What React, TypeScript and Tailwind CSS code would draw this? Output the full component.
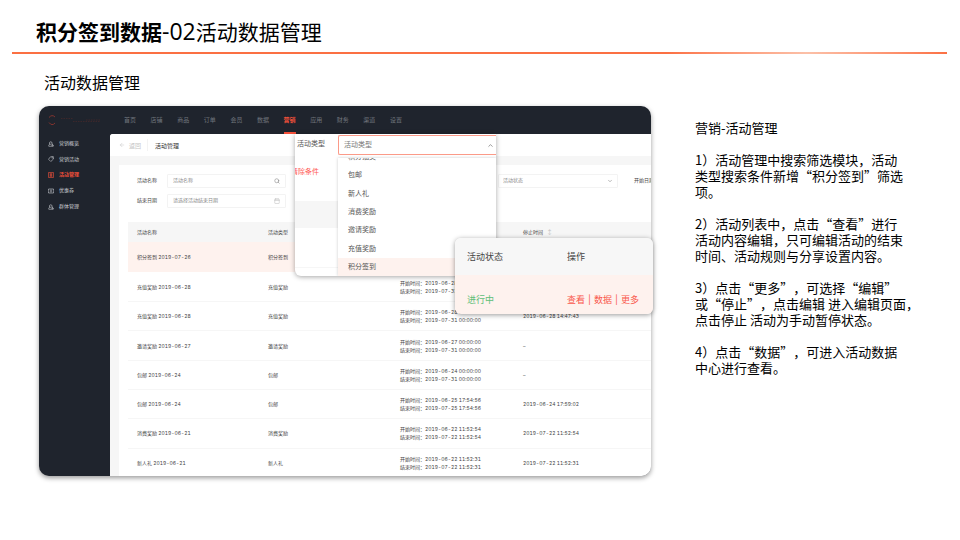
import React from "react";
import { ArrowLeft, Calendar, ChevronDown, ChevronUp, Search } from "lucide-react";

const navItems = ["首页", "店铺", "商品", "订单", "会员", "数据", "营销", "应用", "财务", "渠道", "设置"];

const sideItems = [
  { label: "营销概览", icon: "bell" },
  { label: "营销活动", icon: "tag" },
  { label: "活动管理", icon: "board" },
  { label: "优惠券", icon: "ticket" },
  { label: "群体管理", icon: "bell" },
];

const rows = [
  { name: "积分签到 2019-07-26", type: "积分签到", start: "2019-07-26 00:00:00", end: "2019-07-31 00:00:00", stop: "–" },
  { name: "充值奖励 2019-06-28", type: "充值奖励", start: "2019-06-28 00:00:00", end: "2019-07-31 00:00:00", stop: "–" },
  { name: "充值奖励 2019-06-28", type: "充值奖励", start: "2019-06-28 00:00:00", end: "2019-07-31 00:00:00", stop: "2019-06-28 14:47:43" },
  { name: "邀请奖励 2019-06-27", type: "邀请奖励", start: "2019-06-27 00:00:00", end: "2019-07-31 00:00:00", stop: "–" },
  { name: "包邮 2019-06-24", type: "包邮", start: "2019-06-24 00:00:00", end: "2019-07-31 00:00:00", stop: "–" },
  { name: "包邮 2019-06-24", type: "包邮", start: "2019-06-25 17:54:56", end: "2019-07-25 17:54:56", stop: "2019-06-24 17:59:02" },
  { name: "消费奖励 2019-06-21", type: "消费奖励", start: "2019-06-22 11:52:54", end: "2019-07-22 11:52:54", stop: "2019-07-22 11:52:54" },
  { name: "新人礼 2019-06-21", type: "新人礼", start: "2019-06-22 11:52:31", end: "2019-07-22 11:52:31", stop: "2019-07-22 11:52:31" },
];

const options = ["积分抽奖", "包邮", "新人礼", "消费奖励", "邀请奖励", "充值奖励", "积分签到"];

const notes = [
  ["营销-活动管理"],
  ["1）活动管理中搜索筛选模块，活动", "类型搜索条件新增“积分签到”筛选", "项。"],
  ["2）活动列表中，点击“查看”进行", "活动内容编辑，只可编辑活动的结束", "时间、活动规则与分享设置内容。"],
  ["3）点击“更多”，可选择“编辑”", "或“停止”，点击编辑 进入编辑页面，", "点击停止 活动为手动暂停状态。"],
  ["4）点击“数据”，可进入活动数据", "中心进行查看。"],
];

function SideIcon({ kind }: { kind: string }) {
  return (
    <svg viewBox="0 0 12 12" className="h-[6px] w-[6px] shrink-0" fill="none" stroke="currentColor" strokeWidth="1.2" aria-hidden="true">
      {kind === "bell" && (
        <>
          <path d="M3 6.5V4a2.5 2.5 0 0 1 5 0v2.500M1.500 10.500V8.500L3 6.500h4M1.500 10.500h9V8L8 6" />
          <circle cx="8.500" cy="8.500" r="1" />
        </>
      )}
      {kind === "tag" && (
        <>
          <path d="M5 1.500 10.500 1 11 6 5.500 11 1 6.500Z" />
          <circle cx="8.300" cy="3.700" r=".7" />
        </>
      )}
      {kind === "board" && <path d="M1 1h10v10H1zM3 4h6M3 8h6M6 2v8M4 6h4" />}
      {kind === "ticket" && <path d="M1 2h10v2.500L10 6l1 1.500V10H1V7.500L2 6 1 4.500zM4 4.500h4M4 7.500h4" />}
    </svg>
  );
}

function Header() {
  return (
    <header className="flex h-7 items-center text-[#70747c]">
      <div className="flex w-[71px] items-center gap-[5px] pl-[9px]">
        <svg viewBox="0 0 16 24" className="h-3 w-2" fill="none" stroke="#a33a30" strokeWidth="1.500" aria-hidden="true">
          <path d="M2 7Q8 0 14 6M2 17Q8 25 14 18" />
        </svg>
        <svg viewBox="0 0 80 12" className="h-[6px] w-10" fill="none" stroke="#5a2a2b" strokeWidth="1" strokeDasharray="3 2" aria-hidden="true">
          <path d="M0 3h24M24 9h54M50 6h28" />
        </svg>
      </div>
      <nav className="ml-[14px] flex h-full w-[278px] justify-between text-[6px]">
        {navItems.map((item) => (
          <a
            key={item}
            href="#"
            className={
              item === "营销"
                ? "flex items-center border-b-2 border-[#f4503a] font-bold text-[#f4503a]"
                : "flex items-center border-b-2 border-transparent"
            }
          >
            {item}
          </a>
        ))}
      </nav>
    </header>
  );
}

function Sidebar() {
  return (
    <nav className="flex h-20 w-[71px] shrink-0 flex-col justify-between pt-[2px] text-[5px] text-[#c9ccd1]">
      {sideItems.map((item) => (
        <a
          key={item.label}
          href="#"
          className={
            item.label === "活动管理"
              ? "flex h-[15px] items-center gap-[5px] pl-[9px] font-bold text-[#f4503a]"
              : "flex h-[15px] items-center gap-[5px] pl-[9px]"
          }
        >
          <SideIcon kind={item.icon} />
          {item.label}
        </a>
      ))}
    </nav>
  );
}

function Filters() {
  const field = "flex h-[14px] items-center rounded-[1px] border border-[#f3f3f3]";
  const input = "min-w-0 flex-1 bg-transparent text-[5px] text-[#777] outline-none placeholder:text-[#8a8a8a]";
  return (
    <form className="flex h-[57px] pt-[9px] pl-[18px] text-[5px] text-[#444]">
      <div className="flex w-[149px] flex-col gap-[6px]">
        <div className="flex items-center gap-[9px]">
          <label htmlFor="name" className="w-[21px]">活动名称</label>
          <div className={`${field} w-[119px] px-[5px]`}>
            <input id="name" placeholder="活动名称" className={input} />
            <Search className="h-[6px] w-[6px] text-[#777]" />
          </div>
        </div>
        <div className="flex items-center gap-[9px]">
          <label htmlFor="ends" className="w-[21px]">结束日期</label>
          <div className={`${field} w-[119px] px-[5px]`}>
            <input id="ends" placeholder="请选择活动结束日期" className={input} />
            <Calendar className="h-[6px] w-[6px] text-[#bbb]" />
          </div>
        </div>
      </div>
      <div className="ml-[212px] flex h-[14px] items-center">
        <div className={`${field} w-[120px] px-[4px]`}>
          <select aria-label="活动状态" className="flex-1 appearance-none bg-transparent text-[5px] text-[#8a8a8a] outline-none">
            <option>活动状态</option>
          </select>
          <ChevronDown className="h-[6px] w-[6px] text-[#777]" />
        </div>
        <span className="ml-4 whitespace-nowrap">开始日期</span>
      </div>
    </form>
  );
}

function ActivityTable() {
  return (
    <table className="ml-[9px] h-[256px] w-[523px] table-fixed border-collapse text-left text-[5px] leading-[8px] text-[#444]">
      <colgroup>
        <col className="w-[131px]" />
        <col className="w-[132px]" />
        <col className="w-[123px]" />
        <col />
      </colgroup>
      <thead>
        <tr className="h-5 bg-[#f6f6f6]">
          <th className="pl-[9px] font-normal">活动名称</th>
          <th className="pl-[9px] font-normal">活动类型</th>
          <th className="pl-[9px] font-normal">活动时间</th>
          <th className="pl-[9px] font-normal">
            停止时间 <span className="pl-[3px] text-[#bbb]">↕</span>
          </th>
        </tr>
      </thead>
      <tbody className="tabular-nums">
        {rows.map((r, i) => (
          <tr key={i} className={i === 0 ? "h-[30px] bg-[#fef2ee]" : "h-[29px] border-b border-[#f6f6f6]"}>
            <td className="pl-[9px]">{r.name}</td>
            <td className="pl-[9px]">{r.type}</td>
            <td className="pl-[9px] whitespace-nowrap">
              开始时间：{r.start}
              <br />
              结束时间：{r.end}
            </td>
            <td className="pl-[9px]">{r.stop}</td>
          </tr>
        ))}
      </tbody>
    </table>
  );
}

function TypeDropdown() {
  return (
    <div className="absolute top-7 left-[256px] flex h-[142px] w-[201px] overflow-hidden rounded-b-[6px] bg-white text-[7px] text-[#555] shadow-[0_1px_5px_rgba(0,0,0,0.35)]">
      <div className="w-[43px] shrink-0">
        <label htmlFor="type" className="block h-5 pl-[2px] leading-5">活动类型</label>
        <div className="flex h-[47px] justify-end overflow-hidden pt-[13px] pr-[19px]">
          <button type="button" className="h-[10px] leading-[10px] whitespace-nowrap text-[#ff5b55]">清除条件</button>
        </div>
        <div className="h-[27px] bg-[#f6f6f6]" />
        <div className="h-10 border-b border-[#f6f6f6]" />
      </div>
      <div className="flex flex-1 flex-col">
        <div className="mt-px flex h-5 shrink-0 items-center rounded-l-[2px] border border-r-0 border-[#fb9a88] pr-[2px] pl-[5px]">
          <select id="type" className="flex-1 appearance-none bg-transparent text-[#777] outline-none">
            <option>活动类型</option>
          </select>
          <ChevronUp className="h-[7px] w-[7px] text-[#555]" />
        </div>
        <div className="mt-[3px] flex flex-1 flex-col justify-end overflow-hidden shadow-[0_0_3px_rgba(0,0,0,0.2)]">
          <ul className="flex h-32 shrink-0 flex-col justify-between">
            {options.map((o) => (
              <li key={o} className={o === "积分签到" ? "h-[18px] bg-[#fef2ee] pl-[10px] leading-[18px]" : "h-[18px] pl-[10px] leading-[18px]"}>
                {o}
              </li>
            ))}
          </ul>
        </div>
      </div>
    </div>
  );
}

function StatusCard() {
  return (
    <div className="absolute top-[132px] left-[416px] w-[198px] overflow-hidden rounded-[6px] text-[9px] text-[#444] shadow-[0_1px_5px_rgba(0,0,0,0.4)]">
      <div className="flex h-[37px] items-center bg-[#f7f7f7] pl-3">
        <span className="w-[100px]">活动状态</span>
        <span>操作</span>
      </div>
      <div className="flex h-[39px] items-end bg-[#fef2ee] pb-2 pl-3">
        <span className="w-[100px] text-[#5fbe78]">进行中</span>
        <span className="flex gap-[3px] text-[#f9584c]">
          <a href="#">查看</a>|<a href="#">数据</a>|<a href="#">更多</a>
        </span>
      </div>
    </div>
  );
}

export default function App() {
  return (
    <main className="min-h-screen bg-white font-['Open_Sans','Noto_Sans_CJK_SC',sans-serif] text-black">
      <div className="px-3 pt-3">
        <h1 className="h-10 pl-6 text-[21px] leading-10">
          <b>积分签到数据</b>
          <span className="text-[23px] leading-none">-02</span>活动数据管理
        </h1>
        <div className="mr-px h-[2px] bg-linear-to-r from-[#fb7043] from-70% via-[#fbc0a8] via-85% to-[#fb7043]" />
      </div>
      <h2 className="mt-[17px] pl-11 text-[16px] leading-6">活动数据管理</h2>
      <div className="mt-[11px] flex items-start gap-11 pl-[39px]">
        <section className="relative w-[612px] shrink-0 font-['Inter','Noto_Sans_CJK_SC',sans-serif]">
          <div className="h-[370px] overflow-hidden rounded-[10px] bg-[#1f242d] shadow-[0_2px_5px_rgba(0,0,0,0.4)]">
            <Header />
            <div className="flex h-[342px]">
              <Sidebar />
              <div className="min-w-0 flex-1 overflow-hidden rounded-tl-[3px] bg-[#f6f6f6]">
                <div className="flex h-[22px] items-center bg-white pl-[9px] text-[6px]">
                  <a href="#" className="flex items-center gap-[4px] text-[#c4c4c4]">
                    <ArrowLeft className="h-[6px] w-[6px]" />
                    返回
                  </a>
                  <span className="ml-[6px] h-3 border-l border-[#f3f3f3]" />
                  <span className="ml-[7px] text-[#333]">活动管理</span>
                </div>
                <div className="mt-[9px] ml-[9px] bg-white">
                  <Filters />
                  <ActivityTable />
                </div>
              </div>
            </div>
          </div>
          <TypeDropdown />
          <StatusCard />
        </section>
        <article lang="zh-CN" className="flex flex-col gap-4 pt-[14px] font-['Noto_Sans_CJK_SC',sans-serif] text-[13px] leading-4 [text-spacing-trim:space-all]">
          {notes.map((lines) => (
            <p key={lines[0]}>
              {lines.map((line) => (
                <span key={line} className="block whitespace-nowrap">{line}</span>
              ))}
            </p>
          ))}
        </article>
      </div>
    </main>
  );
}
